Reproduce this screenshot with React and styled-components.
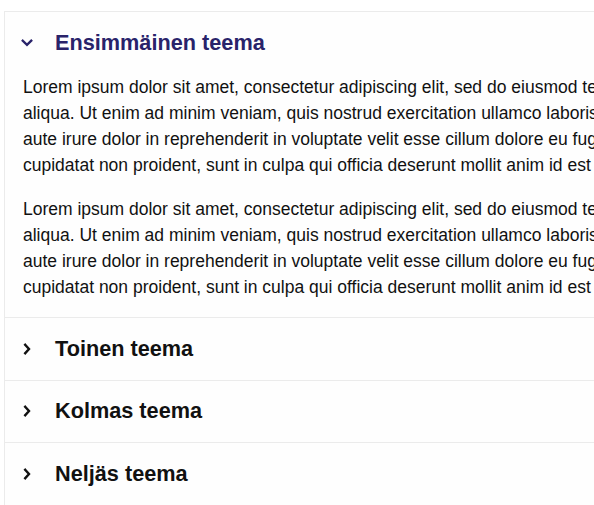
import React, { useState } from "react";
import styled, { createGlobalStyle } from "styled-components";

const GlobalStyle = createGlobalStyle`
  html, body {
    margin: 0;
    padding: 0;
    background: #ffffff;
    overflow: hidden;
  }
  body {
    font-family: "Liberation Sans", Arial, sans-serif;
    color: #111111;
  }
`;

const Page = styled.div`
  padding: 11px 0 0 4px;
`;

const Accordion = styled.div`
  width: 980px;
  box-sizing: border-box;
  border: 1px solid #ebebeb;
  background: #fefefe;
`;

const Item = styled.section`
  border-top: ${(p) => (p.$first ? "none" : "1px solid #ebebeb")};
`;

const Header = styled.button`
  display: flex;
  align-items: center;
  box-sizing: border-box;
  width: 100%;
  height: 61.5px;
  padding: 0 0 0 14px;
  margin: 0;
  border: none;
  background: transparent;
  cursor: pointer;
  text-align: left;
  color: ${(p) => (p.$open ? "#29236a" : "#111111")};
  font-family: "Liberation Sans", Arial, sans-serif;
`;

const IconBox = styled.span`
  display: flex;
  align-items: center;
  justify-content: center;
  width: 16px;
  height: 16px;
  margin-right: 20px;
`;

const Title = styled.span`
  font-size: 21.7px;
  font-weight: 700;
  line-height: 1.2;
`;

const Body = styled.div`
  padding: 0 18px 17.5px 18px;
`;

const Paragraph = styled.p`
  margin: 0 0 18px 0;
  font-size: 17.5px;
  line-height: 26px;
  color: #111111;
  &:last-child {
    margin-bottom: 0;
  }
`;

const Chevron = ({ open }) =>
  open ? (
    <svg width="12" height="8" viewBox="0 0 12 8" fill="none">
      <path
        d="M1.8 1.8 L6 5.8 L10.2 1.8"
        stroke="currentColor"
        strokeWidth="2.4"
        strokeLinecap="square"
        strokeLinejoin="miter"
      />
    </svg>
  ) : (
    <svg width="8" height="12" viewBox="0 0 8 12" fill="none">
      <path
        d="M2.2 1.8 L6 6 L2.2 10.2"
        stroke="currentColor"
        strokeWidth="2.4"
        strokeLinecap="square"
        strokeLinejoin="miter"
      />
    </svg>
  );

const lorem =
  "Lorem ipsum dolor sit amet, consectetur adipiscing elit, sed do eiusmod tempor incididunt ut labore et dolore magna aliqua. Ut enim ad minim veniam, quis nostrud exercitation ullamco laboris nisi ut aliquip ex ea commodo consequat. Duis aute irure dolor in reprehenderit in voluptate velit esse cillum dolore eu fugiat nulla pariatur. Excepteur sint occaecat cupidatat non proident, sunt in culpa qui officia deserunt mollit anim id est laborum.";

const items = [
  { title: "Ensimmäinen teema", paragraphs: [lorem, lorem] },
  { title: "Toinen teema", paragraphs: [lorem, lorem] },
  { title: "Kolmas teema", paragraphs: [lorem, lorem] },
  { title: "Neljäs teema", paragraphs: [lorem, lorem] },
];

export default function App() {
  const [open, setOpen] = useState(0);
  return (
    <Page>
      <GlobalStyle />
      <Accordion>
        {items.map((item, i) => {
          const isOpen = open === i;
          return (
            <Item key={item.title} $first={i === 0}>
              <Header
                $open={isOpen}
                aria-expanded={isOpen}
                onClick={() => setOpen(isOpen ? -1 : i)}
              >
                <IconBox>
                  <Chevron open={isOpen} />
                </IconBox>
                <Title>{item.title}</Title>
              </Header>
              {isOpen && (
                <Body>
                  {item.paragraphs.map((p, j) => (
                    <Paragraph key={j}>{p}</Paragraph>
                  ))}
                </Body>
              )}
            </Item>
          );
        })}
      </Accordion>
    </Page>
  );
}
